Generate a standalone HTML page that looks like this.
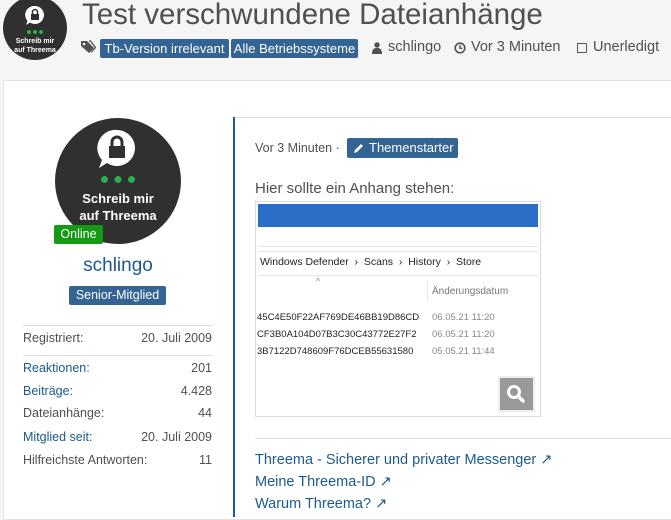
<!DOCTYPE html>
<html><head><meta charset="utf-8"><style>
*{margin:0;padding:0;box-sizing:border-box}
body{width:671px;height:514px;overflow:hidden;background:#f5f5f5;font-family:"Liberation Sans",sans-serif;color:#505050;position:relative}
.a{position:absolute;white-space:nowrap}
.blue{color:#1d5a8e}
.badge{background:#346493;color:#fff;border-radius:2px}
</style></head><body>
<div class="a" style="left:3px;top:-4px;width:64px;height:64px;border-radius:50%;background:#303030"></div>
<svg class="a" style="left:24px;top:5px" width="22" height="24" viewBox="0 0 22 24"><path d="M11 1a9 9 0 1 1-5 16.5L2 20l1.5-4A9 9 0 0 1 11 1z" fill="#fff"/><rect x="7" y="9" width="8" height="6" fill="#303030"/><path d="M8.5 9V7a2.5 2.5 0 0 1 5 0v2" stroke="#303030" stroke-width="1.5" fill="none"/></svg>
<div class="a" style="left:27px;top:30px;width:16px;height:4px;background:radial-gradient(circle at 2px 2px,#2ab04e 2px,transparent 2px) 0 0/6px 4px"></div>
<div class="a" style="left:3px;top:37px;width:64px;text-align:center;color:#fff;font-size:7px;font-weight:bold;line-height:9px">Schreib mir<br>auf Threema</div>
<div class="a" style="left:82px;top:-2px;font-size:29.5px;color:#505050">Test verschwundene Dateianhänge</div>
<svg class="a" style="left:80px;top:40px" width="16" height="14" viewBox="0 0 16 14"><path d="M1 1h6l7 7-5 5-8-7z" fill="#505050"/><circle cx="4" cy="4" r="1.3" fill="#f5f5f5"/><path d="M9 1h1.5l5 6.5-4.5 5" stroke="#505050" stroke-width="1.3" fill="none"/></svg>
<div class="a badge" style="left:100px;top:39px;width:129px;height:19px;font-size:13px;line-height:19px;text-align:center">Tb-Version irrelevant</div>
<div class="a badge" style="left:231px;top:39px;width:127px;height:19px;font-size:13px;line-height:19px;text-align:center">Alle Betriebssysteme</div>
<svg class="a" style="left:372px;top:42px" width="10" height="12" viewBox="0 0 10 12"><circle cx="5" cy="3" r="2.7" fill="#505050"/><path d="M0 12c0-5 2-6 5-6s5 1 5 6z" fill="#505050"/></svg>
<div class="a" style="left:388px;top:39px;font-size:14.5px">schlingo</div>
<svg class="a" style="left:454px;top:42px" width="12" height="12" viewBox="0 0 12 12"><circle cx="6" cy="6" r="4.8" stroke="#505050" stroke-width="1.6" fill="none"/><path d="M6 3v3.3h2.3" stroke="#505050" stroke-width="1.4" fill="none"/></svg>
<div class="a" style="left:471px;top:39px;font-size:14.5px">Vor 3 Minuten</div>
<div class="a" style="left:577px;top:43px;width:10px;height:10px;border:1.4px solid #505050;border-radius:1px"></div>
<div class="a" style="left:593px;top:39px;font-size:14.5px">Unerledigt</div>
<div class="a" style="left:3px;top:80px;width:680px;height:440px;background:#fff;border:1px solid #e2e2e2"></div>
<div class="a" style="left:233px;top:117px;width:2px;height:400px;background:#1d5a8e"></div>
<div class="a" style="left:235px;top:117px;width:440px;height:1px;background:#e2e2e2"></div>
<div class="a" style="left:55px;top:118px;width:126px;height:126px;border-radius:50%;background:#303030"></div>
<svg class="a" style="left:95px;top:128px" width="44" height="48" viewBox="0 0 22 24"><path d="M11 1a9 9 0 1 1-5 16.5L2 20l1.5-4A9 9 0 0 1 11 1z" fill="#fff"/><rect x="7" y="9" width="8" height="6" fill="#303030"/><path d="M8.5 9V7a2.5 2.5 0 0 1 5 0v2" stroke="#303030" stroke-width="1.5" fill="none"/></svg>
<div class="a" style="left:101px;top:176px;width:34px;height:7px;background:radial-gradient(circle at 3.5px 3.5px,#2ab04e 3.3px,transparent 3.5px) 0 0/13.5px 7px"></div>
<div class="a" style="left:55px;top:190px;width:126px;text-align:center;color:#fff;font-size:13px;font-weight:bold;line-height:17px">Schreib mir<br>auf Threema</div>
<div class="a" style="left:54px;top:225px;width:49px;height:19px;background:#149a14;color:#fff;font-size:12.5px;line-height:19px;text-align:center;border-radius:2px">Online</div>
<div class="a blue" style="left:55px;top:255px;width:126px;text-align:center;font-size:19px">schlingo</div>
<div class="a badge" style="left:69px;top:286px;width:97px;height:19px;font-size:12.5px;line-height:19px;text-align:center">Senior-Mitglied</div>
<div class="a" style="left:23px;top:325px;width:190px;height:1px;background:#ddd"></div>
<div class="a" style="left:23px;top:355px;width:190px;height:1px;background:#ddd"></div>
<div style="font-size:12.5px">
<div class="a" style="left:23px;top:331px">Registriert:</div><div class="a" style="right:459px;top:331px">20. Juli 2009</div>
<div class="a blue" style="left:23px;top:361px">Reaktionen:</div><div class="a" style="right:459px;top:361px">201</div>
<div class="a blue" style="left:23px;top:384px">Beiträge:</div><div class="a" style="right:459px;top:384px">4.428</div>
<div class="a" style="left:23px;top:406px">Dateianhänge:</div><div class="a" style="right:459px;top:406px">44</div>
<div class="a blue" style="left:23px;top:430px">Mitglied seit:</div><div class="a" style="right:459px;top:430px">20. Juli 2009</div>
<div class="a" style="left:23px;top:453px">Hilfreichste Antworten:</div><div class="a" style="right:459px;top:453px">11</div>
</div>
<div class="a" style="left:255px;top:141px;font-size:12.5px">Vor 3 Minuten ·</div>
<div class="a badge" style="left:347px;top:138px;width:111px;height:20px;font-size:13px;line-height:20px;padding-left:22px">Themenstarter</div>
<svg class="a" style="left:353px;top:142px" width="12" height="12" viewBox="0 0 12 12"><path d="M1 11l1-3 6-6 2 2-6 6z" fill="#fff"/></svg>
<div class="a" style="left:255px;top:180px;font-size:15px">Hier sollte ein Anhang stehen:</div>
<div class="a" style="left:255px;top:201px;width:286px;height:216px;border:1px solid #ddd;background:#fff;overflow:hidden">
 <div class="a" style="left:2px;top:2px;width:280px;height:23px;background:#2a6ec8"></div>
 <div class="a" style="left:2px;top:44px;width:280px;height:1px;background:#e6e6e6"></div>
 <div class="a" style="left:2px;top:49px;width:280px;height:1px;background:#e6e6e6"></div>
 <div class="a" style="left:4px;top:54px;font-size:10.5px;color:#222">Windows Defender &nbsp;›&nbsp; Scans &nbsp;›&nbsp; History &nbsp;›&nbsp; Store</div>
 <div class="a" style="left:2px;top:73px;width:280px;height:1px;background:#e6e6e6"></div>
 <div class="a" style="left:60px;top:74px;font-size:9px;color:#888">^</div>
 <div class="a" style="left:171px;top:79px;width:1px;height:20px;background:#e6e6e6"></div>
 <div class="a" style="left:176px;top:84px;font-size:10px;color:#777">Änderungsdatum</div>
 <div class="a" style="left:1px;top:107px;font-size:9.5px;color:#222;line-height:17px">45C4E50F22AF769DE46BB19D86CD<br>CF3B0A104D07B3C30C43772E27F2<br>3B7122D748609F76DCEB55631580</div>
 <div class="a" style="left:176px;top:107px;font-size:9.5px;color:#888;line-height:17px">06.05.21 11:20<br>06.05.21 11:20<br>05.05.21 11:44</div>
 <div class="a" style="left:242px;top:174px;width:37px;height:36px;background:#999;border:2px solid #eee"></div>
 <svg class="a" style="left:250px;top:182px" width="20" height="20" viewBox="0 0 20 20"><circle cx="8" cy="8" r="5.5" stroke="#fff" stroke-width="3" fill="none"/><path d="M12 12l5 5" stroke="#fff" stroke-width="3.5" stroke-linecap="round"/></svg>
</div>
<div class="a" style="left:255px;top:438px;width:420px;height:1px;background:#e2e2e2"></div>
<div class="blue" style="font-size:14.5px">
<div class="a" style="left:255px;top:452px">Threema - Sicherer und privater Messenger ↗</div>
<div class="a" style="left:255px;top:474px">Meine Threema-ID ↗</div>
<div class="a" style="left:255px;top:496px">Warum Threema? ↗</div>
</div>
</body></html>
